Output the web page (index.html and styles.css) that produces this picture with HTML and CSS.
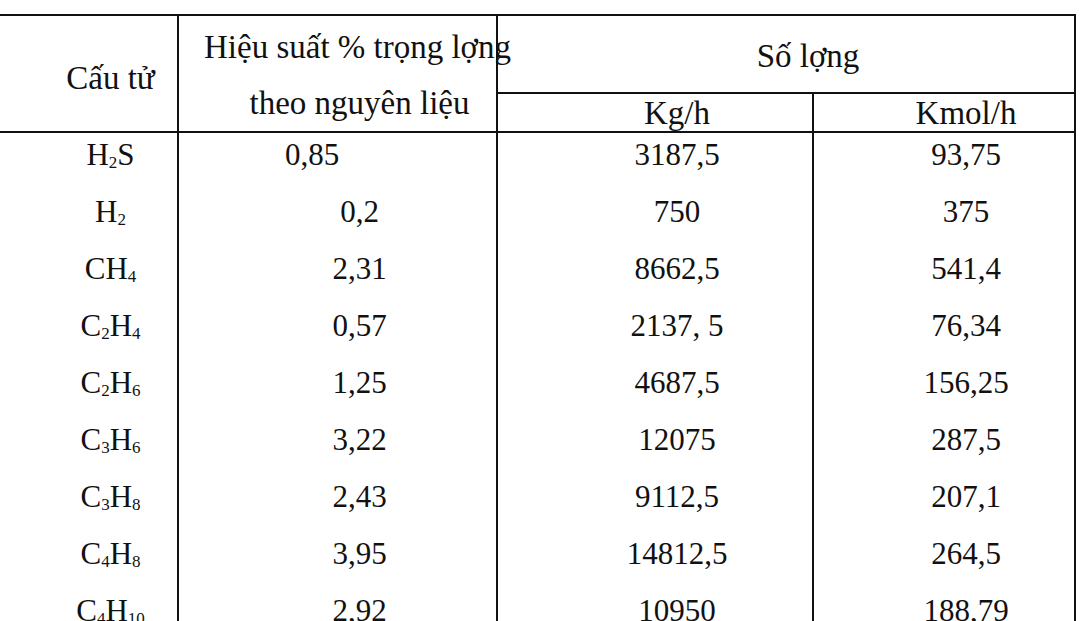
FILE: index.html
```html
<!DOCTYPE html>
<html lang="vi">
<head>
    <meta charset="UTF-8">
    <meta name="viewport" content="width=device-width, initial-scale=1.0">
    <title>Hiệu suất sản phẩm khí</title>
    <link rel="stylesheet" href="styles.css">
</head>
<body>
    <main>
        <table class="gas-table">
            <colgroup>
                <col class="col-name">
                <col class="col-yield">
                <col class="col-kg">
                <col class="col-kmol">
            </colgroup>
            <thead>
                <tr>
                    <th rowspan="2" class="head-name">Cấu tử</th>
                    <th rowspan="2" class="head-yield">
                        <span class="head-line overflow">Hiệu suất % trọng lợng</span>
                        <span class="head-line">theo nguyên liệu</span>
                    </th>
                    <th colspan="2" class="head-group">Số lợng</th>
                </tr>
                <tr>
                    <th class="head-unit">Kg/h</th>
                    <th class="head-unit">Kmol/h</th>
                </tr>
            </thead>
            <tbody>
                <tr>
                    <td>H<sub>2</sub>S</td>
                    <td class="shift-left">0,85</td>
                    <td>3187,5</td>
                    <td>93,75</td>
                </tr>
                <tr>
                    <td>H<sub>2</sub></td>
                    <td>0,2</td>
                    <td>750</td>
                    <td>375</td>
                </tr>
                <tr>
                    <td>CH<sub>4</sub></td>
                    <td>2,31</td>
                    <td>8662,5</td>
                    <td>541,4</td>
                </tr>
                <tr>
                    <td>C<sub>2</sub>H<sub>4</sub></td>
                    <td>0,57</td>
                    <td>2137, 5</td>
                    <td>76,34</td>
                </tr>
                <tr>
                    <td>C<sub>2</sub>H<sub>6</sub></td>
                    <td>1,25</td>
                    <td>4687,5</td>
                    <td>156,25</td>
                </tr>
                <tr>
                    <td>C<sub>3</sub>H<sub>6</sub></td>
                    <td>3,22</td>
                    <td>12075</td>
                    <td>287,5</td>
                </tr>
                <tr>
                    <td>C<sub>3</sub>H<sub>8</sub></td>
                    <td>2,43</td>
                    <td>9112,5</td>
                    <td>207,1</td>
                </tr>
                <tr>
                    <td>C<sub>4</sub>H<sub>8</sub></td>
                    <td>3,95</td>
                    <td>14812,5</td>
                    <td>264,5</td>
                </tr>
                <tr>
                    <td>C<sub>4</sub>H<sub>10</sub></td>
                    <td>2,92</td>
                    <td>10950</td>
                    <td>188,79</td>
                </tr>
            </tbody>
        </table>
    </main>
</body>
</html>
```

FILE: styles.css
```css
body {
    margin: 0;
    padding: 0;
    background-color: #fff;
    color: #111;
    font-family: "Liberation Serif", "Times New Roman", serif;
    overflow: hidden;
}

main {
    padding-top: 14px;
}

.gas-table {
    border-collapse: collapse;
    table-layout: fixed;
    width: 1076px;
    border-top: 2px solid #111;
    border-right: 2px solid #111;
}

.col-name {
    width: 178px;
}

.col-yield {
    width: 319px;
}

.col-kg {
    width: 316px;
}

.col-kmol {
    width: 262px;
}

th,
td {
    padding: 0 0 0 44px;
    text-align: center;
    font-weight: normal;
    white-space: nowrap;
    border-left: 2px solid #111;
}

th:first-child,
td:first-child {
    border-left: none;
}

thead th {
    font-size: 33px;
    border-bottom: 2px solid #111;
}

.head-name {
    padding-top: 8px;
    line-height: 40px;
}

.head-yield {
    line-height: 56px;
    padding-top: 3px;
    vertical-align: top;
}

.head-line {
    display: block;
}

.head-line.overflow {
    text-align: left;
    margin-left: -19px;
}

.head-group {
    line-height: 69px;
    padding-top: 6px;
}

.head-unit {
    line-height: 35px;
    padding-top: 2px;
}

thead tr:last-child th {
    border-left: 2px solid #111;
}

tbody td {
    font-size: 31px;
    line-height: 34px;
    padding-top: 5px;
    padding-bottom: 18px;
}

td.shift-left {
    padding-left: 0;
    padding-right: 51px;
}

sub {
    font-size: 17px;
    vertical-align: -3px;
    line-height: 0;
}
```
